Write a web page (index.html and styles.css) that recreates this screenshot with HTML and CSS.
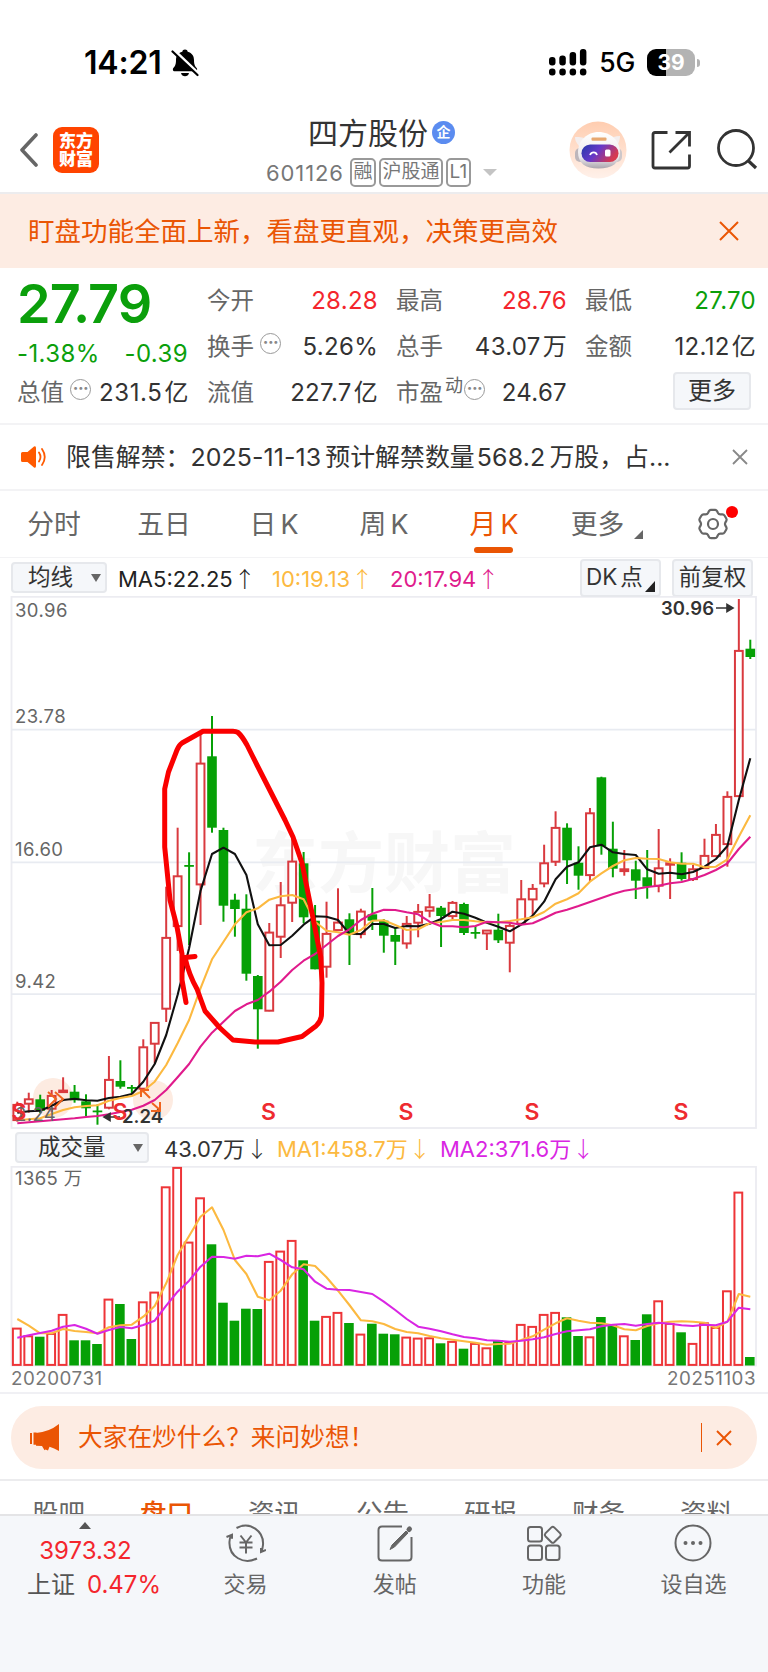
FILE: index.html
```html
<!DOCTYPE html>
<html lang="zh-CN">
<head>
  <meta charset="UTF-8" />
  <meta name="viewport" content="width=device-width, initial-scale=1.0" />
  <title>四方股份 601126</title>
  <link rel="stylesheet" href="styles.css">
</head>
<body>
  <div class="status">
    <span class="time">14:21</span>
    <svg class="bell" width="28" height="28" viewBox="0 0 28 28">
      <path d="M14 0.500c1.500 0 2.500.9 2.700 2.200 4.500 1.300 6.300 4.400 6.300 8.300 0 5 1.200 6.600 2.700 8 .9.900.4 3.300-.9 3.300H3.200c-1.300 0-1.800-2.400-.9-3.300 1.500-1.400 2.700-3 2.700-8 0-3.900 1.800-7 6.300-8.300C11.500 1.400 12.500 .5 14 .5z"/>
      <path d="M10 24h8c-.5 2.300-2 3.300-4 3.300s-3.500-1-4-3.300z"/>
      <path d="M3 1.500L27.500 25" stroke="#fff" stroke-width="3.500"/>
      <path d="M1.500 2.500L26.500 26" stroke="#000" stroke-width="2.200" stroke-linecap="round"/>
    </svg>
    <div class="status-right">
      <svg width="38" height="27" viewBox="0 0 38 27">
        <rect x="0" y="8" width="6.500" height="8.500" rx="3"/><rect x="10.300" y="6.500" width="6.500" height="10" rx="3"/>
        <rect x="20.600" y="3" width="6.500" height="13.500" rx="3"/><rect x="30.900" y="0" width="6.500" height="16.500" rx="3"/>
        <rect x="0" y="19.500" width="6.500" height="7" rx="3"/><rect x="10.300" y="19.500" width="6.500" height="7" rx="3"/>
        <rect x="20.600" y="19.500" width="6.500" height="7" rx="3"/><rect x="30.900" y="19.500" width="6.500" height="7" rx="3"/>
      </svg>
      <span class="net">5G</span>
      <span class="battery">39</span><i class="battery-tip"></i>
    </div>
  </div>

  <div class="header">
    <svg class="back" width="20" height="34" viewBox="0 0 20 34"><path d="M17 2L3 17l14 15" fill="none" stroke="#666" stroke-width="3.600" stroke-linecap="round" stroke-linejoin="round"/></svg>
    <div class="logo">东方<br>财富</div>
    <div class="title">
      <div class="name">四方股份<span class="badge">企</span></div>
      <div class="code"><span class="num">601126</span><span class="tag t1">融</span><span class="tag">沪股通</span><span class="tag">L1</span><i class="caret"></i></div>
    </div>
    <div class="actions">
      <svg width="58" height="58" viewBox="0 0 58 58">
        <defs>
          <linearGradient id="halo" x1="0" y1="0" x2="0" y2="1"><stop offset="0" stop-color="#ffcdb0"/><stop offset="1" stop-color="#fff1ea"/></linearGradient>
          <linearGradient id="visor" x1="0" y1="0" x2="1" y2="0.400"><stop offset="0" stop-color="#2439a8"/><stop offset=".5" stop-color="#6638c8"/><stop offset="1" stop-color="#d63a50"/></linearGradient>
          <linearGradient id="shell" x1="0" y1="0" x2="0" y2="1"><stop offset="0" stop-color="#fff"/><stop offset=".7" stop-color="#ece9ec"/><stop offset="1" stop-color="#aaa5ad"/></linearGradient>
        </defs>
        <circle cx="29" cy="29" r="28.500" fill="url(#halo)"/>
        <rect x="6" y="27" width="10" height="14" rx="5" fill="#bdb6bb"/><rect x="43" y="27" width="10" height="14" rx="5" fill="#cdc7ca"/>
        <path d="M6 16c5 0 9 0 12 3l-7 9c-1-5-5-6-5-12zM51 15c-5 0-8 1-11 4l7 9c1-4 4-7 4-13z" fill="#f4eeee"/>
        <path d="M29.500 11C42 11 51 20 51 31c0 11-8 16.500-21.500 16.500S9 42 9 31C9 20 18 11 29.500 11z" fill="url(#shell)"/>
        <rect x="22.500" y="16.500" width="15" height="3.200" rx="1" fill="#e8a870"/>
        <rect x="12.500" y="23.500" width="37" height="17.500" rx="8.700" fill="url(#visor)"/>
        <path d="M21 34c1.500-3.600 6-3.600 7 0" fill="none" stroke="#fff" stroke-width="1.800"/>
        <rect x="36" y="28.500" width="5.500" height="7" rx="1.500" fill="#fff"/>
      </svg>
      <svg class="share" width="40" height="40" viewBox="0 0 40 40" fill="none" stroke="#333" stroke-width="2.800"><path d="M16.500 2.500H4q-2 0-2 2V36q0 2 2 2h32.500q2 0 2-2V24.500M24.500 2.500h14v14M38 3L18.500 22.500"/></svg>
      <svg class="search" width="42" height="42" viewBox="0 0 42 42" fill="none" stroke="#333" stroke-width="2.800"><circle cx="20" cy="19" r="17.500"/><path d="M32 31.500l8 7.500" stroke-width="3.200"/></svg>
    </div>
  </div>

  <div class="banner">
    <span>盯盘功能全面上新，看盘更直观，决策更高效</span>
    <svg width="20" height="20" viewBox="0 0 20 20"><path d="M1 1l18 18M19 1L1 19" stroke="#ea5504" stroke-width="2"/></svg>
  </div>

  <div class="quote">
    <div class="main">
      <div class="price">27.79</div>
      <div class="chg"><span>-1.38%</span><span>-0.39</span></div>
      <div class="cell"><label>总值<i class="dots">···</i></label><b>231.5<em>亿</em></b></div>
    </div>
    <div class="stats">
      <div class="cell"><label>今开</label><b class="red">28.28</b></div>
      <div class="cell"><label>最高</label><b class="red">28.76</b></div>
      <div class="cell"><label>最低</label><b class="green">27.70</b></div>
      <div class="cell"><label>换手<i class="dots">···</i></label><b>5.26%</b></div>
      <div class="cell"><label>总手</label><b>43.07<em>万</em></b></div>
      <div class="cell"><label>金额</label><b>12.12<em>亿</em></b></div>
      <div class="cell"><label>流值</label><b>227.7<em>亿</em></b></div>
      <div class="cell"><label>市盈<sup>动</sup><i class="dots tight">···</i></label><b>24.67</b></div>
      <div class="cell more-cell"><span class="more">更多</span></div>
    </div>
  </div>

  <div class="news">
    <svg width="26" height="24" viewBox="0 0 26 24"><path d="M1.500 7h5L13 1.500Q15 .5 15 3v18q0 2.500-2 1.500L6.500 17h-5Q0 17 0 15.500v-7Q0 7 1.500 7z" fill="#ff5a00"/><path d="M18 7.500q3 4.500 0 9M21 4q5.500 8 0 16" fill="none" stroke="#ff5a00" stroke-width="1.800" stroke-linecap="round"/></svg>
    <span class="news-text">限售解禁：<span class="n1">2025-11-13</span>预计解禁数量<span class="n2">568.2</span>万股，占...</span>
    <svg width="16" height="16" viewBox="0 0 16 16"><path d="M1 1l14 14M15 1L1 15" stroke="#888" stroke-width="1.800"/></svg>
  </div>

  <div class="periods">
    <span>分时</span><span>五日</span><span>日<i>K</i></span><span>周<i>K</i></span><span class="on">月<i>K</i></span><span class="pmore">更多<svg width="9" height="9"><path d="M9 0v9H0z" fill="#666"/></svg></span>
    <div class="gear">
      <svg width="32" height="32" viewBox="0 0 32 32" fill="none" stroke="#666" stroke-width="2.200" stroke-linejoin="round"><path d="M12 3q.6-1.200 2-1.200h4q1.400 0 2 1.200l1 2q.7 1.300 2.200 1.300h2.300q1.300 0 2 1.200l1.800 3q.7 1.200 0 2.400l-1 1.700q-.7 1.400 0 2.800l1 1.700q.7 1.200 0 2.400l-1.800 3q-.7 1.200-2 1.200h-2.300q-1.500 0-2.200 1.300l-1 2q-.6 1.200-2 1.200h-4q-1.400 0-2-1.200l-1-2q-.7-1.300-2.200-1.300H6.500q-1.300 0-2-1.200l-1.800-3q-.7-1.200 0-2.400l1-1.700q.7-1.400 0-2.800l-1-1.700q-.7-1.200 0-2.400l1.800-3q.7-1.200 2-1.200h2.300Q10.300 6.300 11 5z"/><circle cx="16" cy="16" r="5"/></svg>
      <i class="dot"></i>
    </div>
  </div>

  <div class="ma">
    <span class="btn btn-ma">均线<i class="tri"></i></span>
    <span class="m5">MA5:22.25<i class="arr">↑</i></span><span class="m10">10:19.13<i class="arr">↑</i></span><span class="m20">20:17.94<i class="arr">↑</i></span>
    <span class="btn btn-dk">DK<em>点</em><svg width="10" height="11"><path d="M10 0v11H0z" fill="#222"/></svg></span>
    <span class="btn btn-fq">前复权</span>
  </div>

  <svg id="kline" class="chart" width="768" height="533" viewBox="0 596 768 533"></svg>

  <div class="vol">
    <span class="btn btn-vol">成交量<i class="tri"></i></span>
    <span class="v0">43.07万<i class="arr">↓</i></span><span class="v1">MA1:458.7万<i class="arr">↓</i></span><span class="v2">MA2:371.6万<i class="arr">↓</i></span>
  </div>

  <svg id="volume" class="chart" width="768" height="201" viewBox="0 1166 768 201"></svg>
  <div class="dates"><span>20200731</span><span>20251103</span></div>

  <div class="ask">
    <div class="pill">
      <svg width="30" height="28" viewBox="0 0 30 28" fill="#ea5504"><path d="M29 0v27q-5-3-9.500-4.200L18 26.500l-2.500-1-1 .8-2.500-4.300-6-.3V9Q19 8 29 0zM0 9h2v11H0zM3.500 8.500h3v12.200h-3z"/></svg>
      <span>大家在炒什么？来问妙想！</span>
      <i class="bar"></i>
      <svg width="16" height="16" viewBox="0 0 16 16"><path d="M1 1l14 14M15 1L1 15" stroke="#ea5504" stroke-width="1.900"/></svg>
    </div>
  </div>

  <div class="sections">
    <span>股吧</span><span class="on">盘口</span><span>资讯</span><span>公告</span><span>研报</span><span>财务</span><span>资料</span>
  </div>

  <div class="bottom">
    <div class="index">
      <i class="up"></i>
      <div class="pts">3973.32</div>
      <div class="pct">上证<span>0.47%</span></div>
    </div>
    <div class="item">
      <svg width="40" height="38" viewBox="0 0 40 38" fill="none" stroke="#666" stroke-width="2"><path d="M10.500 4C24-3 38 7 37 21q-.3 3.500-1.700 6.500M31 34.500C18 41 2.500 33 3.500 17.500q.2-3 1.300-6M.5 13l5.500-2.200v4M40 26l-5 2v-4M14.500 11.500l5.500 7 5.500-7M13.500 18.500h13M13.500 23.500h13M20 18.500v11"/></svg>
      <span>交易</span>
    </div>
    <div class="item">
      <svg width="40" height="38" viewBox="0 0 40 38" fill="none" stroke="#666" stroke-width="2"><path d="M27 2.500H7q-3.500 0-3.500 3.500v27q0 3.500 3.500 3.500h26q3.500 0 3.500-3.500V13"/><path d="M15 25.500l2-4.500L31 7l2 2L19.500 23z" fill="#666" stroke-width="1"/><path d="M34 5.500l.5-.5" stroke-width="5" stroke-linecap="round"/></svg>
      <span>发帖</span>
    </div>
    <div class="item">
      <svg width="40" height="38" viewBox="0 0 40 38" fill="none" stroke="#666" stroke-width="2"><rect x="4" y="3" width="14" height="14.500" rx="2.500"/><rect x="4" y="21.500" width="14" height="14.500" rx="2.500"/><rect x="22" y="21.500" width="13.500" height="14.500" rx="2.500"/><path d="M27.400 3.400q1.400-1.200 2.800 0l6 6q1.200 1.400 0 2.800l-6 6q-1.400 1.200-2.800 0l-6-6q-1.200-1.400 0-2.800z"/></svg>
      <span>功能</span>
    </div>
    <div class="item">
      <svg width="40" height="38" viewBox="0 0 40 38"><circle cx="20" cy="19" r="17.500" fill="none" stroke="#666" stroke-width="2"/><g fill="#666"><circle cx="12.500" cy="19" r="2"/><circle cx="20" cy="19" r="2"/><circle cx="27.500" cy="19" r="2"/></g></svg>
      <span>设自选</span>
    </div>
  </div>

  <script src="chart.js"></script>
</body>
</html>
```
FILE: styles.css
```css
* {
  box-sizing: border-box;
}
body {
  margin: 0;
  width: 768px;
  height: 1672px;
  overflow: hidden;
  background: #fff;
  color: #333;
  font-family: Inter, "Noto Sans CJK SC", sans-serif;
  font-size: 24px;
  line-height: 1;
}
i, em {
  font-style: normal;
}
svg {
  display: block;
  flex: none;
}
span, div, label {
  white-space: nowrap;
}
.red {
  color: #f4262d;
}
.green {
  color: #0b9f0b;
}

/* status bar */
.status {
  height: 106px;
  padding: 19px 68px 0 84px;
  display: flex;
  align-items: center;
  color: #000;
}
.time {
  font-size: 32px;
  font-weight: 600;
  width: 80px;
  letter-spacing: -0.2px;
}
.bell {
  margin-left: 7px;
}
.status-right {
  margin-left: auto;
  display: flex;
  align-items: center;
}
.net {
  font-size: 26.500px;
  font-weight: 500;
  margin: 0 12px 0 12px;
  letter-spacing: -0.2px;
}
.battery {
  width: 48px;
  height: 27px;
  border-radius: 9px;
  background: linear-gradient(90deg, #000 40%, #b3b3b3 40%);
  color: #fff;
  font-size: 21px;
  font-weight: 700;
  line-height: 27px;
  text-align: center;
}
.battery-tip {
  width: 3px;
  height: 8px;
  margin-left: 2px;
  border-radius: 0 3px 3px 0;
  background: #b3b3b3;
}

/* title bar */
.header {
  height: 88px;
  border-bottom: 2px solid #ececee;
  display: flex;
  align-items: center;
  padding: 2px 10px 0 19px;
}
.logo {
  width: 46px;
  height: 46px;
  margin-left: 14px;
  border-radius: 9px;
  background: #ff4400;
  color: #fff;
  font-size: 17px;
  font-weight: 900;
  line-height: 18px;
  padding-top: 5px;
  text-align: center;
}
.title {
  margin-left: 167px;
  width: 234px;
}
.name {
  display: flex;
  align-items: center;
  font-size: 30px;
  height: 36px;
  margin-top: 2px;
  padding-left: 42px;
}
.badge {
  width: 23px;
  height: 23px;
  margin-left: 4px;
  border-radius: 50%;
  background: #5b8cf0;
  color: #fff;
  font-size: 14px;
  font-weight: 700;
  line-height: 22px;
  text-align: center;
}
.code {
  display: flex;
  align-items: center;
  color: #777;
  font-size: 22px;
  height: 30px;
  margin-top: 7px;
}
.num {
  width: 78px;
  letter-spacing: 0.9px;
}
.tag {
  height: 29px;
  border: 2px solid #999;
  border-radius: 5px;
  padding: 0 1.500px;
  margin-left: 3px;
  font-size: 19px;
  line-height: 24px;
}
.t1 {
  margin-left: 6px;
}
.caret {
  margin-left: 12px;
  border: 7px solid transparent;
  border-top-color: #c4c4c4;
  border-bottom: 0;
}
.actions {
  margin-left: auto;
  display: flex;
  align-items: center;
}
.share {
  margin-left: 24px;
}
.search {
  margin-left: 25px;
}

.banner {
  height: 74px;
  padding: 0 29px 0 28px;
  background: #fdece3;
  color: #ea5504;
  font-size: 26.500px;
  display: flex;
  align-items: center;
  justify-content: space-between;
}

/* quote panel */
.quote {
  height: 157px;
  border-bottom: 2px solid #f3f3f5;
  padding: 10px 0 0 17px;
  display: flex;
  gap: 19px;
}
.main {
  width: 171px;
}
.price {
  height: 54px;
  line-height: 52px;
  font-size: 54px;
  font-weight: 600;
  color: #0b9f0b;
  letter-spacing: -1px;
}
.chg {
  height: 38px;
  padding-top: 5px;
  display: flex;
  justify-content: space-between;
  align-items: center;
  color: #0b9f0b;
  letter-spacing: 0.4px;
}
.stats {
  display: grid;
  grid-template-columns: repeat(3, 170px);
  grid-auto-rows: 46px;
  column-gap: 19px;
}
.cell {
  height: 46px;
  display: flex;
  align-items: center;
  justify-content: space-between;
}
.cell label {
  display: flex;
  align-items: center;
  color: #666;
  font-size: 23.500px;
}
.cell b {
  font-weight: 400;
  letter-spacing: 0.3px;
  margin-right: -1px;
}
.cell em {
  margin-left: 2px;
}
.main .cell b {
  letter-spacing: 0.6px;
}
.dots {
  width: 21px;
  height: 21px;
  margin: -8px 0 0 6px;
  border: 1.500px solid #999;
  border-radius: 50%;
  font-size: 17px;
  font-weight: 700;
  line-height: 17px;
  letter-spacing: -0.5px;
  text-align: center;
  color: #888;
}
.dots.tight {
  margin-left: 1px;
}
.cell sup {
  font-size: 18px;
  line-height: 18px;
  margin: -14px 0 0 2px;
}
.more-cell {
  justify-content: flex-end;
}
.more {
  width: 78px;
  height: 38px;
  margin: -4px 4px 0 0;
  border: 2px solid #e6e8ec;
  border-radius: 4px;
  background: #f5f7fa;
  line-height: 33px;
  text-align: center;
}

.news {
  height: 66px;
  border-bottom: 2px solid #f3f3f5;
  padding: 0 20px 0 21px;
  display: flex;
  align-items: center;
}
.news-text {
  margin: 0 auto 0 19px;
  font-size: 24.900px;
}
.n1 {
  letter-spacing: 0.1px;
}
.n2 {
  letter-spacing: 0.2px;
  margin-left: 2px;
}
.n1, .n2 {
  margin-right: 4px;
}

/* period tabs */
.periods {
  height: 67px;
  border-bottom: 1px solid #f3f3f5;
  display: flex;
  color: #666;
  font-size: 26.800px;
}
.periods > span {
  width: 110px;
  line-height: 67px;
  text-align: center;
  position: relative;
  left: -1px;
}
.periods i {
  margin-left: 4px;
}
.periods .on {
  color: #ea5504;
}
.periods .on::after {
  content: "";
  position: absolute;
  left: 35px;
  bottom: 4px;
  width: 39px;
  height: 6px;
  border-radius: 3px;
  background: #ea5504;
}
.periods .pmore {
  padding-right: 13px;
}
.pmore svg {
  position: absolute;
  right: 16px;
  bottom: 18px;
}
.gear {
  position: relative;
  margin: 17px 0 0 37px;
}
.dot {
  position: absolute;
  right: -9px;
  top: -1px;
  width: 12px;
  height: 12px;
  margin-top: -1px;
  border-radius: 50%;
  background: #f00;
}

/* indicator rows */
.ma, .vol {
  display: flex;
  align-items: center;
  font-size: 22px;
}
.ma {
  height: 38px;
  padding: 1px 15px 0 11px;
}
.vol {
  height: 37px;
  padding-left: 15px;
}
.btn {
  display: flex;
  align-items: center;
  border: 2px solid #e6e8ec;
  border-radius: 4px;
  background: #f5f7fa;
  font-size: 22.500px;
  height: 31px;
}
.btn-ma {
  width: 96px;
  padding-left: 15px;
}
.btn-vol {
  width: 134px;
  padding-left: 21px;
}
.tri {
  border: 5px solid transparent;
  border-top: 8px solid #666;
  border-bottom: 0;
  margin: 0 4px 0 auto;
}
.arr {
  font-family: "Noto Sans CJK SC", sans-serif;
  font-weight: 300;
  margin-left: 1px;
}
.m5 {
  margin-left: 11px;
  width: 154px;
  color: #222;
}
.m10 {
  width: 118px;
  color: #fcb940;
}
.m20 {
  color: #e01b8c;
}
.btn-dk, .btn-fq {
  height: 38px;
}
.btn-dk {
  margin-left: auto;
  width: 81px;
  padding-left: 4px;
  position: relative;
}
.btn-dk svg {
  position: absolute;
  right: 4px;
  bottom: 3px;
}
.btn-dk em {
  margin-left: 3px;
}
.btn-fq {
  width: 81px;
  margin-left: 11px;
  justify-content: center;
}
.v0 {
  margin-left: 15px;
  width: 113px;
}
.v1 {
  width: 163px;
  color: #fcb940;
}
.v2 {
  color: #d926e3;
}

/* charts */
.chart text {
  font-size: 18.500px;
}
.chart .axis {
  fill: #666;
  letter-spacing: 0.4px;
}
.chart .sig {
  font-size: 23px;
  font-weight: 600;
  fill: #ee2b30;
  text-anchor: middle;
}
.chart .peak {
  font-weight: 600;
  fill: #333;
}
.chart .mark {
  font-size: 66px;
  font-weight: 700;
  fill: #f7f7f7;
}
.dates {
  height: 27px;
  border-bottom: 2px solid #f0f0f4;
  padding: 3px 12px 0 11px;
  display: flex;
  justify-content: space-between;
  font-size: 18.800px;
  line-height: 18px;
  letter-spacing: 0.5px;
  color: #777;
}

.ask {
  height: 87px;
  padding: 12px 11px 0;
  border-bottom: 2px solid #ececee;
}
.pill {
  height: 63px;
  border-radius: 31px;
  background: #fdece3;
  color: #ea5504;
  font-size: 24.700px;
  display: flex;
  align-items: center;
  padding: 0 25px 0 19px;
}
.pill span {
  margin-left: 18px;
}
.bar {
  width: 1.500px;
  height: 29px;
  margin: 0 14px 0 auto;
  background: #ea5504;
}

/* half hidden behind the bottom bar */
.sections {
  height: 33px;
  padding: 19px 35px 0 32px;
  overflow: hidden;
  display: flex;
  justify-content: space-between;
  color: #666;
  font-size: 26.500px;
}
.sections .on {
  color: #ea5504;
  font-weight: 500;
}

.bottom {
  height: 159px;
  border-top: 2px solid #e4e4e6;
  background: #f5f7fa;
  display: flex;
  padding-top: 7px;
}
.index {
  width: 171px;
  text-align: center;
}
.up {
  display: block;
  width: 0;
  margin: -1px auto 0;
  border: 6.500px solid transparent;
  border-top: 0;
  border-bottom: 7px solid #555;
}
.pts {
  color: #f4262d;
  line-height: 30px;
  margin-top: 7px;
}
.pct {
  color: #555;
  line-height: 30px;
  margin-top: 4px;
  padding-left: 17px;
}
.pct span {
  margin-left: 12px;
  color: #f4262d;
}
.item {
  width: 149.300px;
  display: flex;
  flex-direction: column;
  align-items: center;
  color: #666;
  font-size: 22px;
}
.item svg {
  margin-top: 1px;
}
.item span {
  margin-top: 11px;
}
```
FILE: chart.js
```js
const RED = "#d93a3f";
const GREEN = "#06a006";
const STEP = 11.453;
const X0 = 17.3;

// [up?, high, body top, body bottom, low]
const candles = [
  [1,1101.7,1104.3,1120.7,1121.7],[1,1092.7,1098.7,1104.3,1112.7],[0,1094.7,1099.3,1110.7,1113],[1,1090,1095.3,1109.3,1112],
  [1,1077.3,1090,1092.7,1092.7],[0,1085,1091.7,1100.3,1102.7],[0,1094.3,1101.3,1108.3,1116],[0,1104.3,1110.5,1112,1124.7],
  [1,1056,1079.3,1108.3,1109.3],[0,1060.3,1081,1086.7,1088.7],[0,1085,1087,1088.5,1093],[1,1039.3,1046.7,1089.3,1089.3],
  [1,1022.3,1022.3,1044.3,1063.3],[1,886.7,937.3,1009.3,1022],[1,827.7,875.7,926.7,951],[0,852.3,865,866.7,945],
  [1,733.3,763,885,925],[0,716,756.3,827.7,832.7],[0,827.7,830,905.7,921.7],[0,893.7,899.7,909,936.7],
  [0,894.3,908.7,973.7,980.7],[0,975,976,1009.3,1048.7],[1,923,932,1011.3,1011.3],[1,882,904.7,937.3,958],
  [1,836.7,861,903.3,922],[0,852,863.3,917.3,923.3],[0,905,920.7,969.3,969.3],[1,901.7,933.3,967.3,977.7],
  [1,888.3,922,930.7,930.7],[0,913.3,919.3,934,965],[1,908.7,911,934.7,938.3],[0,888,914.3,920.7,930],
  [0,919,920.7,935.7,952.7],[0,928,935,941.7,965],[1,916,923.3,944,948.7],[1,904,911.3,923.3,937.3],
  [1,894,906.7,911.3,917.3],[0,906,907.7,916,947],[1,901,902.3,916.7,919.3],[0,902.7,904,933,935],
  [0,926,932,933.7,938.7],[1,930,930,934,950],[0,913.7,929.7,940.3,943],[1,923.3,925.3,943.3,972.3],
  [1,880,898.7,924.3,924.3],[1,884,888.3,900,915],[1,844.7,862.7,884,887.3],[1,811.3,827.3,862.3,866],
  [0,823.3,827.7,860.3,884],[0,846.3,862.7,875.7,889.7],[1,808,812.7,875.7,881.7],[0,776.7,777.3,846.3,854.7],
  [0,821.7,848.7,868.7,877.3],[1,850,868.7,871.7,875.7],[0,860.7,869.3,880.7,899],[0,850,877.3,886.7,898.7],
  [1,829,867.7,886.3,892.3],[1,858.3,862.7,865.3,899],[0,852.3,862.7,879,880.7],[1,865,868.7,879.7,881],
  [1,838.7,855.3,868.7,868.7],[1,824,834.3,856.7,856.7],[1,791.3,796.3,844.7,866.7],[1,599,650.3,796.7,796.7],
  [0,639.7,648.7,657,659]
];

const ma5 = [1112.7,1111.3,1110.7,1105.7,1100,1098.7,1100.3,1100.7,1098,1096.7,1094,1081.7,1064,1035,995,948.3,891,854,847.7,854,875,924.3,945.3,945,935.7,924.7,916.3,916.7,920,933.7,934,924,924,928,926,926.3,923.7,919,911.7,913.7,917.7,922.7,926.7,931.3,924.7,915.7,901.7,879.3,866.7,862.3,847.3,844.7,852.3,854,855,869.3,873.7,872.7,874.3,872,866.7,859,846,800,758.3];
const ma10 = [1120.3,1119.3,1118.3,1114,1110,1107.3,1106,1105.3,1100.7,1098,1096,1091,1081.7,1065,1043.3,1020,988.3,959.3,941.7,924.3,912.3,908.3,899.7,896.3,895,899.3,921.7,930.7,932.3,934.7,930,920.7,920.3,925,930,929.3,923.3,922,920,920,921.3,922.3,922.3,921,919.3,917.3,912,903.7,899.3,893.3,881.7,873.3,866,860.3,858,858.7,859,862.3,863.7,863.7,867.3,866.7,859.3,836.7,815.3];
const ma20 = [1123.3,1122.3,1121.3,1120.3,1119.3,1118.3,1117,1116,1114.3,1112,1109.7,1105.7,1100,1090,1077.3,1064,1046.7,1032.7,1021.7,1011,1004.3,1000,991.7,981.7,970,960.7,954,945,936,929.3,920,913.7,909.7,910,912.3,914.3,921.7,926.3,926.3,927.3,926,921.7,922.3,922.7,924.7,923.3,918.3,912.7,909.7,906,902,898,894,890.7,889,887,885.7,883.3,882,879,875,870,863.3,849,836.7];

// bar tops, colours come from volUp
const volTop = [1328,1335.7,1336.7,1333.3,1314.3,1340.3,1340.3,1344,1299,1304,1339,1301.7,1292,1186.7,1167.3,1242,1197.7,1244.3,1302.7,1320.7,1308.7,1309,1261.3,1251,1240.3,1260.3,1320.7,1316.3,1312.3,1323,1334,1323.7,1333.7,1334.3,1337,1338,1337.7,1343.3,1341.3,1348.7,1343.3,1347.7,1340,1342.3,1324.3,1326.3,1314.3,1312.3,1317.3,1336,1336.7,1317,1324,1335.7,1340,1314.3,1300.7,1323.3,1332.3,1343.3,1322.7,1327.3,1290.7,1192,1357];
const volUp = "11011000100111111000001110011010001110101101111100100100110111110";
const vma1 = [1319,1325.7,1333.3,1333.3,1329,1331,1332,1333.3,1327.3,1325.3,1324.7,1316.7,1306,1283.3,1255,1236,1216.7,1207.3,1230,1260,1274,1296.7,1300.3,1290.7,1274.3,1264.3,1266,1277.3,1290.7,1305,1320.3,1321.3,1324,1329,1332,1333.3,1336,1338.3,1339.7,1341.3,1342.7,1344.7,1344,1343.7,1340,1336.3,1329.7,1323.3,1318.3,1320.7,1322.7,1323.3,1325.3,1329.3,1330.3,1326,1323.3,1321.7,1321.3,1321.7,1322.7,1328,1321.7,1294,1296.7];
const vma2 = [1337.7,1335.3,1333,1330.7,1326.7,1325,1328.7,1333.7,1330,1327,1328.3,1325,1320.7,1305.7,1291.7,1280.7,1266.7,1256.7,1257,1258.7,1255.7,1256.3,1253.7,1260,1267.3,1269.3,1281.7,1288.7,1289.7,1290,1292,1294,1301.7,1310,1319,1326.7,1328.7,1331.3,1334.3,1337,1338.3,1340.3,1340.7,1341.7,1340.7,1339.3,1337.3,1334,1331.3,1330.3,1329.3,1326.3,1324.7,1324,1325.7,1324,1322.7,1323.7,1325.3,1326,1324.7,1325.3,1321.7,1307.7,1309.3];

const cx = i => X0 + i * STEP;

function line(values, color) {
  const pts = values.map((y, i) => `${cx(i).toFixed(1)},${y}`).join(" ");
  return `<polyline points="${pts}" fill="none" stroke="${color}" stroke-width="2.100" stroke-linejoin="round"/>`;
}

function box(x, top, bottom, up, color) {
  if (!up) return `<rect x="${x - 4.8}" y="${top}" width="9.600" height="${Math.max(bottom - top, 1.8)}" fill="${color}"/>`;
  return `<rect x="${x - 3.9}" y="${top + 0.6}" width="7.800" height="${Math.max(bottom - top - 1.2, 1)}" fill="#fff" stroke="${color}" stroke-width="2"/>`;
}

function drawKline() {
  let s = `<text class="mark" x="252" y="887" textLength="264">东方财富</text>`;
  s += `<rect x="11.500" y="596.800" width="744.500" height="531.200" fill="none" stroke="#ececf1" stroke-width="1.800"/>`;
  [729.7, 862.3, 994.2].forEach(y => {
    s += `<path d="M11 ${y}H756" stroke="#e8ebf1" stroke-width="1.800"/>`;
  });
  s += `<circle cx="53" cy="1098" r="20" fill="#fdebe1"/><circle cx="153" cy="1100" r="20" fill="#fdebe1"/>`;
  candles.forEach(([up, h, t, b, l], i) => {
    const c = up ? RED : GREEN;
    s += `<path d="M${cx(i)} ${h}V${l}" stroke="${c}" stroke-width="2"/>` + box(cx(i), t, b, up, c);
  });
  s += line(ma5, "#111") + line(ma10, "#fcb940") + line(ma20, "#e01b8c");
  [["30.96", 617], ["23.78", 723], ["16.60", 856], ["9.42", 988], ["2.24", 1121]].forEach(([v, y]) => {
    s += `<text class="axis" x="15" y="${y}">${v}</text>`;
  });
  s += `<text class="peak" x="661" y="615" textLength="53">30.96</text><path d="M716 608h14M727 604.500l6 3.500-6 3.500z" stroke="#333" stroke-width="1.600" fill="#333"/>`;
  s += `<text class="peak" x="122" y="1123">2.24</text><path d="M120 1117h-12M110 1113.500l-6 3.500 6 3.500z" stroke="#333" stroke-width="1.600" fill="#333"/>`;
  s += `<path d="M48 1092l8 7-8 8M55 1092l8 7-8 8M142 1090l8 8M141 1097v-7h8M152 1103l8 7M160 1102v9h-9" fill="none" stroke="#f0641e" stroke-width="2"/>`;
  [19, 120, 268.5, 406, 532, 681].forEach(x => {
    s += `<text class="sig" x="${x}" y="1120">S</text>`;
  });
  // hand-drawn loop
  s += `<path d="M195 956.500L185 957.500Q189 975 197 989L205 1011L220 1028L233 1040L255 1042H278L302 1036.500L316 1026Q321.500 1021 321.500 1014L322 983L320.700 957L312 913L302 863L293 837L285 820L257 765L247 745Q242 736 238 732.500Q236 731.300 233 731.300H203L182 743Q179 745 177 750L168.500 772L164.700 789V847L170 900L177 927L182 954V980L186 1002.500" fill="none" stroke="#fa0000" stroke-width="5" stroke-linejoin="round" stroke-linecap="round"/>`;
  document.getElementById("kline").innerHTML = s;
}

function drawVolume() {
  let s = `<rect x="11.500" y="1166.800" width="744.500" height="198.700" fill="none" stroke="#ececf1" stroke-width="1.800"/>`;
  volTop.forEach((t, i) => {
    const up = volUp[i] === "1";
    s += box(cx(i) - 0.5, t, 1365.5, up, up ? "#ee3538" : GREEN);
  });
  s += line(vma1, "#fcb940") + line(vma2, "#d926e3");
  s += `<text class="axis" x="15" y="1185">1365 万</text>`;
  document.getElementById("volume").innerHTML = s;
}

drawKline();
drawVolume();
```
